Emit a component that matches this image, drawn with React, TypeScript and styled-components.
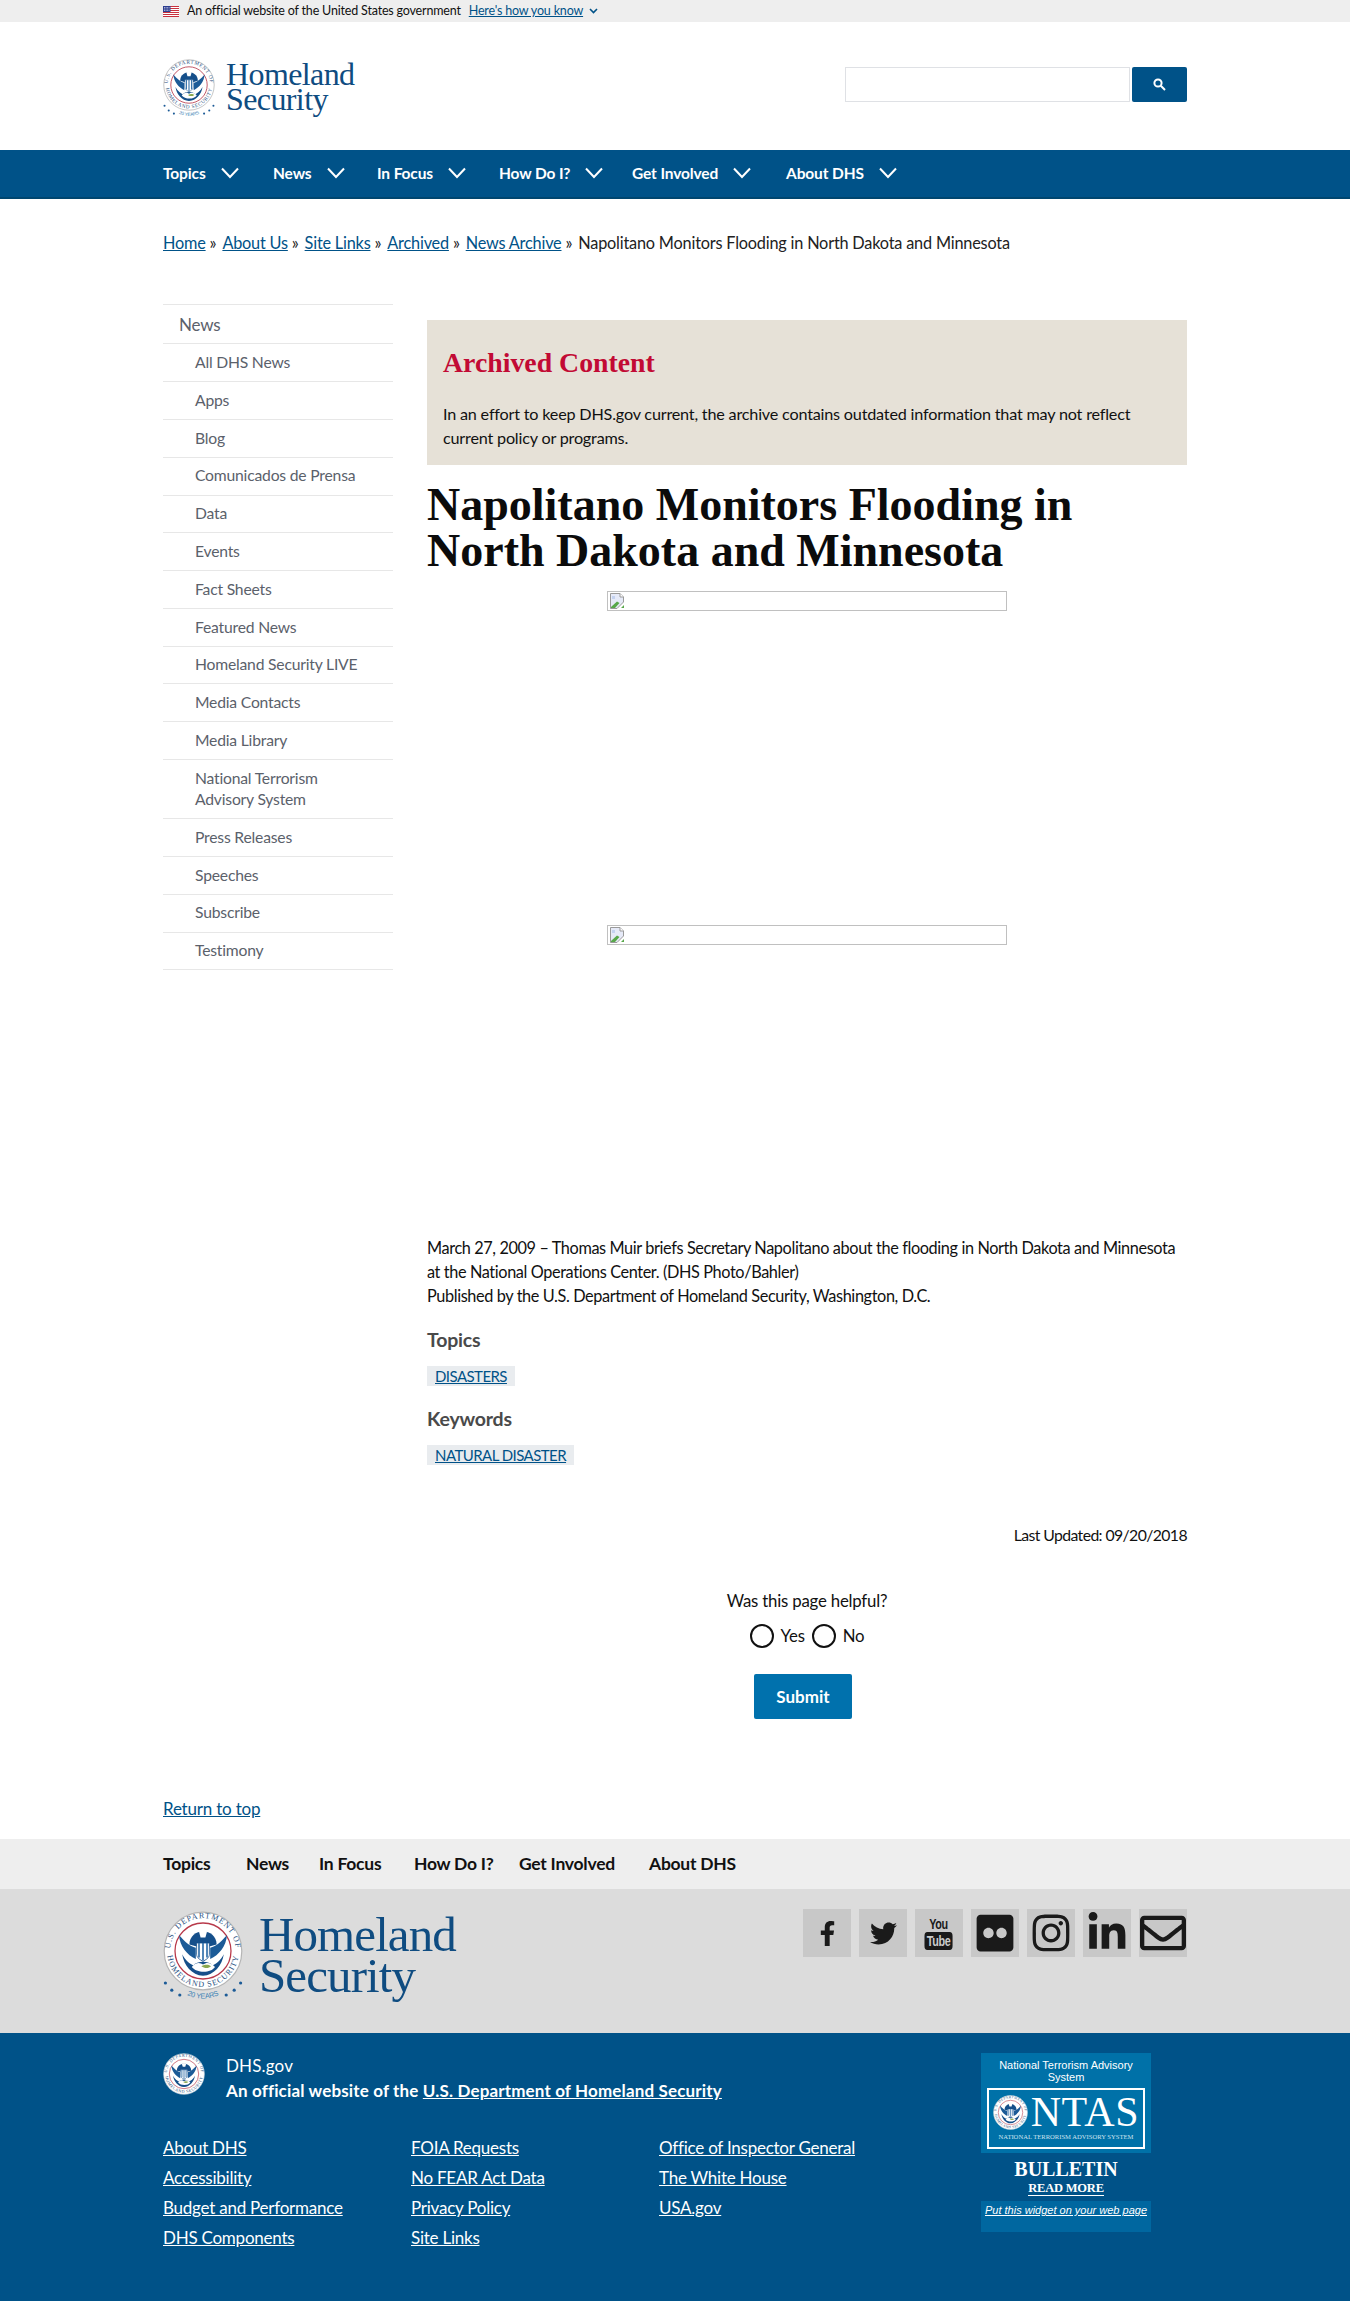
import React from "react";
import styled, { createGlobalStyle } from "styled-components";
import { FaFacebookF, FaTwitter, FaFlickr, FaInstagram, FaLinkedinIn, FaRegEnvelope } from "react-icons/fa";

const SANS = `"Lato", "Noto Sans", sans-serif`;
const SERIF = `"Liberation Serif", "Times New Roman", serif`;
const BLUE = "#005288";

const Global = createGlobalStyle`
  html, body { margin: 0; padding: 0; background: #fff; }
  body { font-family: ${SANS}; font-size: 16px; line-height: 24px; color: #111; letter-spacing: -0.2px; }
  a { color: ${BLUE}; }
  * { box-sizing: border-box; }
`;

const Wrap = styled.div`
  width: 1024px;
  margin: 0 auto;
`;
const Banner = styled.div`
  height: 22px;
  background: #eeeeee;
`;
const BannerRow = styled(Wrap)`
  display: flex;
  align-items: center;
  height: 22px;
  font-size: 12.5px;
  line-height: 22px;
  letter-spacing: -0.18px;
`;
const FlagBox = styled.svg`
  width: 16px;
  height: 11px;
  margin-right: 8px;
`;
const BannerLink = styled.a`
  margin-left: 8px;
  text-decoration: underline;
`;
const TinyChevron = styled.svg`
  width: 9px;
  height: 6px;
  margin-left: 6px;
`;
const Header = styled(Wrap)`
  height: 128px;
  display: flex;
  align-items: flex-start;
  justify-content: space-between;
`;
const Brand = styled.div<{ $big?: boolean }>`
  display: flex;
  align-items: flex-start;
  gap: ${(p) => (p.$big ? "16px" : "11px")};
  padding-top: ${(p) => (p.$big ? "22px" : "37px")};
`;
const BrandText = styled.div<{ $big?: boolean }>`
  font-family: ${SERIF};
  color: #0f4c81;
  font-size: ${(p) => (p.$big ? "49px" : "32px")};
  line-height: ${(p) => (p.$big ? "41px" : "25px")};
  letter-spacing: ${(p) => (p.$big ? "-0.9px" : "-0.6px")};
  padding-top: 3px;
`;
const SearchBox = styled.div`
  display: flex;
  gap: 2px;
  margin-top: 45px;
`;
const SearchInput = styled.div`
  width: 285px;
  height: 35px;
  border: 1px solid #dfe1e5;
  background: #fff;
`;
const SearchButton = styled.div`
  width: 55px;
  height: 35px;
  background: ${BLUE};
  border-radius: 2px;
  display: flex;
  align-items: center;
  justify-content: center;
  color: #fff;
`;
const NavBar = styled.nav`
  height: 49px;
  background: ${BLUE};
  border-bottom: 2px solid #00466f;
`;
const NavRow = styled(Wrap)`
  display: flex;
  align-items: center;
  height: 47px;
  padding-bottom: 1px;
`;
const NavItem = styled.div<{ $w: number }>`
  width: ${(p) => p.$w}px;
  flex: none;
  display: flex;
  align-items: center;
  gap: 15px;
  color: #fff;
  font-weight: 700;
  font-size: 15.5px;
  letter-spacing: -0.12px;
`;
const Breadcrumb = styled(Wrap)`
  padding-top: 32px;
  height: 105px;
  font-size: 16.3px;
  display: flex;
  gap: 6px;
  white-space: nowrap;
`;
const Crumb = styled.span`
  color: #222;
`;
const Columns = styled(Wrap)`
  display: flex;
  align-items: flex-start;
  gap: 34px;
`;
const Side = styled.ul`
  list-style: none;
  width: 230px;
  flex: none;
  margin: 0;
  padding: 0;
  border-top: 1px solid #e7e7e7;
`;
const SideItem = styled.li<{ $top?: boolean }>`
  color: #5b616b;
  border-bottom: 1px solid #e7e7e7;
  padding: 7.7px 20px 7.7px ${(p) => (p.$top ? "16px" : "32px")};
  font-size: ${(p) => (p.$top ? "17px" : "15.7px")};
  line-height: ${(p) => (p.$top ? "23px" : "21.4px")};
`;
const Main = styled.main`
  width: 760px;
  flex: none;
  padding-top: 16px;
`;
const Archive = styled.section`
  background: #e6e1d7;
  height: 145px;
  padding: 24px 16px 0;
`;
const ArchiveTitle = styled.h2`
  margin: 0 0 20px;
  font-family: ${SERIF};
  font-weight: 700;
  font-size: 27.8px;
  line-height: 38px;
  letter-spacing: 0;
  color: #c20a34;
`;
const ArchiveText = styled.p`
  margin: 0;
  font-size: 16.2px;
`;
const Title = styled.h1`
  margin: 17px 0 17px;
  font-family: ${SERIF};
  font-weight: 700;
  font-size: 46px;
  line-height: 46px;
  letter-spacing: 0;
  color: #0b0b0b;
`;
const Figure = styled.div<{ $after: number }>`
  width: 400px;
  height: 20px;
  margin: 0 auto ${(p) => p.$after}px;
  border: 1px solid #c0c0c0;
  padding: 1px;
  line-height: 0;
`;
const Caption = styled.p`
  margin: 0;
  font-size: 16.3px;
  letter-spacing: -0.39px;
`;
const Label = styled.h3<{ $top: number }>`
  margin: ${(p) => p.$top}px 0 12px;
  font-size: 19.5px;
  font-weight: 700;
  line-height: 24px;
  color: #4a4a4a;
`;
const Tag = styled.a`
  display: inline-block;
  height: 20px;
  line-height: 20px;
  padding: 0 8px;
  background: #e9ecef;
  font-size: 15px;
  letter-spacing: -0.55px;
  text-transform: uppercase;
  text-decoration: underline;
`;
const Updated = styled.div`
  margin-top: 56px;
  text-align: right;
  font-size: 15.8px;
  letter-spacing: -0.6px;
`;
const Helpful = styled.form`
  margin-top: 41px;
  display: flex;
  flex-direction: column;
  align-items: center;
`;
const Question = styled.div`
  font-size: 16.8px;
  line-height: 25px;
`;
const RadioRow = styled.div`
  display: flex;
  align-items: center;
  gap: 7px;
  margin-top: 10px;
  height: 26px;
  font-size: 16.8px;
`;
const Radio = styled.span`
  width: 24px;
  height: 24px;
  border: 2px solid #111;
  border-radius: 50%;
  background: #fff;
`;
const Submit = styled.button`
  margin: 25px 8px 0 0;
  width: 98px;
  height: 45px;
  border: 0;
  border-radius: 2px;
  background: #0071ad;
  color: #fff;
  font-family: ${SANS};
  font-weight: 700;
  font-size: 17px;
`;
const TopLink = styled(Wrap)`
  margin-top: 78px;
  height: 42px;
  font-size: 17px;
`;
const FootNav = styled.div`
  height: 50px;
  background: #eeeeee;
`;
const FootNavRow = styled(Wrap)`
  display: flex;
  align-items: center;
  height: 50px;
  gap: 32px;
`;
const FootNavItem = styled.span<{ $w: number }>`
  width: ${(p) => p.$w}px;
  white-space: nowrap;
  font-weight: 700;
  font-size: 17.5px;
  letter-spacing: -0.25px;
  color: #111;
`;
const LogoBand = styled.div`
  height: 144px;
  background: #dcdcdc;
`;
const LogoRow = styled(Wrap)`
  display: flex;
  justify-content: space-between;
  align-items: flex-start;
`;
const Socials = styled.div`
  display: flex;
  gap: 8px;
  margin-top: 20px;
`;
const Social = styled.div`
  width: 48px;
  height: 48px;
  background: #c8c8c8;
  color: #1a1a1a;
  display: flex;
  align-items: center;
  justify-content: center;
`;
const YouTube = styled.div`
  display: flex;
  flex-direction: column;
  align-items: center;
  font-family: "Liberation Sans", sans-serif;
  font-weight: 700;
  font-size: 15px;
  line-height: 14px;
  letter-spacing: -0.4px;
  transform: scaleX(0.72);
`;
const Tube = styled.span`
  background: #1a1a1a;
  color: #ccc;
  border-radius: 4px;
  padding: 2px 3px;
  margin-top: 1px;
`;
const Dark = styled.footer`
  height: 269px;
  background: ${BLUE};
  color: #fff;
  a { color: #fff; }
`;
const DarkRow = styled(Wrap)`
  display: flex;
  justify-content: space-between;
  align-items: flex-start;
`;
const DarkLeft = styled.div`
  width: 760px;
  padding-top: 20px;
`;
const Identity = styled.div`
  display: flex;
  gap: 21px;
  align-items: flex-start;
`;
const IdentityText = styled.div`
  font-size: 17px;
  line-height: 25px;
  letter-spacing: 0.15px;
`;
const Bold = styled.strong`
  font-weight: 700;
`;
const LinkGrid = styled.div`
  display: grid;
  grid-template-columns: 248px 248px 1fr;
  margin-top: 30px;
`;
const LinkCol = styled.div`
  display: flex;
  flex-direction: column;
  align-items: flex-start;
`;
const FootLink = styled.a`
  font-size: 17px;
  line-height: 30px;
  letter-spacing: -0.24px;
  text-decoration: underline;
`;
const Widget = styled.div`
  width: 170px;
  margin: 20px 36px 0 0;
  text-align: center;
`;
const WidgetTop = styled.div`
  background: #0071a8;
  height: 100px;
  padding: 6px 6px 0;
  font-family: "Liberation Sans", Arial, sans-serif;
  font-size: 11px;
  line-height: 12px;
  letter-spacing: 0;
`;
const NtasBox = styled.div`
  margin-top: 5px;
  height: 61px;
  border: 2px solid #fff;
  padding: 3px 4px 0;
  display: flex;
  flex-direction: column;
`;
const NtasRow = styled.div`
  display: flex;
  align-items: center;
  justify-content: space-between;
`;
const NtasWord = styled.span`
  font-family: ${SERIF};
  font-size: 42px;
  line-height: 38px;
  letter-spacing: 0.5px;
`;
const NtasSub = styled.div`
  font-family: ${SERIF};
  font-size: 6.6px;
  line-height: 12px;
  white-space: nowrap;
  color: #cfe3ef;
`;
const Bulletin = styled.div`
  font-family: ${SERIF};
  font-weight: 700;
  font-size: 20px;
  line-height: 18px;
  margin-top: 7px;
  letter-spacing: 0;
`;
const ReadMore = styled.div`
  font-family: ${SERIF};
  font-weight: 700;
  font-size: 12.5px;
  line-height: 14px;
  width: fit-content;
  margin: 3px auto 0;
  border-bottom: 1px solid #fff;
`;
const WidgetBottom = styled.div`
  margin-top: 5px;
  height: 31px;
  background: #0067a0;
  font-family: "Liberation Sans", Arial, sans-serif;
  font-size: 11px;
  font-style: italic;
  line-height: 18px;
  letter-spacing: 0;
  text-decoration: underline;
`;

const Seal = ({ w, years, dark }: { w: number; years?: boolean; dark?: boolean }) => {
  const id = `arc${w}`;
  return (
    <svg width={w} height={years ? w * 1.15 : w} viewBox={years ? "0 0 100 115" : "0 0 100 100"} aria-hidden="true" style={{ flex: "none" }}>
      <defs>
        <path id={`${id}t`} d="M 9 50 A 41 41 0 0 1 91 50" />
        <path id={`${id}b`} d="M 5 50 A 45 45 0 0 0 95 50" />
        <path id={`${id}y`} d="M 26 103 Q 50 116 74 103" />
      </defs>
      <circle cx="50" cy="50" r="48.5" fill="#fff" stroke={dark ? "#c9d4dd" : "#b5b5b5"} strokeWidth="1.5" />
      <text fontFamily="Liberation Serif, serif" fontSize="10" fill="#1f4f80" letterSpacing="1.2">
        <textPath href={`#${id}t`} startOffset="50%" textAnchor="middle">U.S. DEPARTMENT OF</textPath>
      </text>
      <text fontFamily="Liberation Serif, serif" fontSize="10" fill="#1f4f80" letterSpacing="1.2">
        <textPath href={`#${id}b`} startOffset="50%" textAnchor="middle">HOMELAND SECURITY</textPath>
      </text>
      <circle cx="50" cy="50" r="35" fill="#fff" stroke="#b8394a" strokeWidth="1.6" />
      <path d="M33 42 C33 20 67 20 67 42 L59 44 H41 Z" fill="#154f8a" />
      <path d="M45 26 C47 24 53 24 55 26 L53 33 H47 Z" fill="#fff" />
      <path d="M20 30 C21 44 30 55 41 60 L41 46 C33 44 27 38 20 30 Z" fill="#1c5b97" />
      <path d="M80 30 C79 44 70 55 59 60 L59 46 C67 44 73 38 80 30 Z" fill="#1c5b97" />
      <path d="M42 40 H58 V54 C58 59 53 61 50 63 C47 61 42 59 42 54 Z" fill="#fff" stroke="#154f8a" strokeWidth="1" />
      <path d="M45 40 V58 M50 40 V62 M55 40 V58" stroke="#2a6aa6" strokeWidth="2" />
      <path d="M24 54 C26 68 36 80 50 81 C64 80 74 68 76 54 C72 62 66 66 62 68 C58 62 42 62 38 68 C34 66 28 62 24 54 Z" fill="#154f8a" />
      <path d="M36 70 C42 63 47 65 50 67 C54 64 60 64 65 70 C60 78 42 78 36 70 Z" fill="#fff" />
      <path d="M48 69 C53 66 58 67 60 69 C57 72 52 72 48 69 Z" fill="#8aa84f" />
      {years && (
        <>
          {[[3, 90], [11, 99], [21, 105], [79, 105], [89, 99], [97, 90]].map(([x, y]) => (
            <circle key={x} cx={x} cy={y} r="2" fill="#1c5b97" />
          ))}
          <text fontFamily="Liberation Sans, sans-serif" fontSize="9" fill="#3b82b5">
            <textPath href={`#${id}y`} startOffset="50%" textAnchor="middle">20 YEARS</textPath>
          </text>
        </>
      )}
    </svg>
  );
};

const Flag = () => (
  <FlagBox viewBox="0 0 16 11" aria-hidden="true">
    <rect width="16" height="11" fill="#fff" />
    {[0, 2, 4, 6, 8, 10].map((y) => (
      <rect key={y} y={y} width="16" height="1" fill="#c8313e" />
    ))}
    <rect width="7.5" height="6" fill="#2d3e8f" />
    <path d="M1 1.5h5.5M1 3h5.5M1 4.5h5.5" stroke="#dfe3f5" strokeWidth=".7" strokeDasharray="1 .6" />
  </FlagBox>
);

const NavChevron = () => (
  <svg width="18" height="12" viewBox="0 0 18 12" aria-hidden="true" fill="none" stroke="#fff" strokeWidth="2">
    <path d="M1 1.5 L9 10 L17 1.5" />
  </svg>
);

const BrokenImage = () => (
  <svg width="16" height="16" viewBox="0 0 16 16" aria-hidden="true">
    <path d="M1.5 .5 H11 L14.5 4 V9 L8 15.5 H1.5 Z" fill="#e6eaf8" stroke="#9a9a9a" />
    <path d="M11 .5 V4 H14.5" fill="#fff" stroke="#9a9a9a" />
    <path d="M2 14 L8 8.5 L10.5 10 L6 15 H2 Z" fill="#58a84a" />
    <path d="M12 15 L15 12 V15 Z" fill="#58a84a" />
    <rect x="3" y="3" width="3" height="3" fill="#c4d2f0" />
  </svg>
);

const SearchGlyph = () => (
  <svg width="13" height="13" viewBox="0 0 13 13" aria-hidden="true" fill="none" stroke="#fff" strokeWidth="2">
    <circle cx="5" cy="5" r="3.6" />
    <path d="M7.8 7.8 L12 12" />
  </svg>
);

const nav: [string, number][] = [
  ["Topics", 110],
  ["News", 104],
  ["In Focus", 122],
  ["How Do I?", 133],
  ["Get Involved", 154],
  ["About DHS", 130],
];
const footNav: [string, number][] = [
  ["Topics", 51],
  ["News", 41],
  ["In Focus", 63],
  ["How Do I?", 73],
  ["Get Involved", 98],
  ["About DHS", 83],
];
const crumbs = ["Home", "About Us", "Site Links", "Archived", "News Archive"];
const side = [
  "All DHS News", "Apps", "Blog", "Comunicados de Prensa", "Data", "Events", "Fact Sheets", "Featured News",
  "Homeland Security LIVE", "Media Contacts", "Media Library", "National Terrorism Advisory System",
  "Press Releases", "Speeches", "Subscribe", "Testimony",
];
const links = [
  ["About DHS", "Accessibility", "Budget and Performance", "DHS Components"],
  ["FOIA Requests", "No FEAR Act Data", "Privacy Policy", "Site Links"],
  ["Office of Inspector General", "The White House", "USA.gov"],
];

export default function App() {
  return (
    <>
      <Global />
      <Banner>
        <BannerRow>
          <Flag />
          <span>An official website of the United States government</span>
          <BannerLink href="#">Here's how you know</BannerLink>
          <TinyChevron viewBox="0 0 9 6" fill="none" stroke={BLUE} strokeWidth="1.6" aria-hidden="true">
            <path d="M1 1 L4.5 4.5 L8 1" />
          </TinyChevron>
        </BannerRow>
      </Banner>
      <Header>
        <Brand>
          <Seal w={52} years />
          <BrandText>Homeland<br />Security</BrandText>
        </Brand>
        <SearchBox>
          <SearchInput />
          <SearchButton><SearchGlyph /></SearchButton>
        </SearchBox>
      </Header>
      <NavBar>
        <NavRow>
          {nav.map(([label, w]) => (
            <NavItem key={label} $w={w}>{label}<NavChevron /></NavItem>
          ))}
        </NavRow>
      </NavBar>
      <Breadcrumb>
        {crumbs.map((c) => (
          <Crumb key={c}><a href="#">{c}</a> »</Crumb>
        ))}
        <Crumb>Napolitano Monitors Flooding in North Dakota and Minnesota</Crumb>
      </Breadcrumb>
      <Columns>
        <Side>
          <SideItem $top>News</SideItem>
          {side.map((s) => <SideItem key={s}>{s}</SideItem>)}
        </Side>
        <Main>
          <Archive>
            <ArchiveTitle>Archived Content</ArchiveTitle>
            <ArchiveText>In an effort to keep DHS.gov current, the archive contains outdated information that may not reflect current policy or programs.</ArchiveText>
          </Archive>
          <Title>Napolitano Monitors Flooding in North Dakota and Minnesota</Title>
          <Figure $after={314}><BrokenImage /></Figure>
          <Figure $after={291}><BrokenImage /></Figure>
          <Caption>
            March 27, 2009 – Thomas Muir briefs Secretary Napolitano about the flooding in North Dakota and Minnesota at the National Operations Center. (DHS Photo/Bahler)
            <br />
            Published by the U.S. Department of Homeland Security, Washington, D.C.
          </Caption>
          <Label $top={20}>Topics</Label>
          <Tag href="#">Disasters</Tag>
          <Label $top={19}>Keywords</Label>
          <Tag href="#">Natural Disaster</Tag>
          <Updated>Last Updated: 09/20/2018</Updated>
          <Helpful>
            <Question>Was this page helpful?</Question>
            <RadioRow>
              <Radio /><span>Yes</span><Radio /><span>No</span>
            </RadioRow>
            <Submit type="button">Submit</Submit>
          </Helpful>
        </Main>
      </Columns>
      <TopLink><a href="#">Return to top</a></TopLink>
      <FootNav>
        <FootNavRow>
          {footNav.map(([label, w]) => <FootNavItem key={label} $w={w}>{label}</FootNavItem>)}
        </FootNavRow>
      </FootNav>
      <LogoBand>
        <LogoRow>
          <Brand $big>
            <Seal w={80} years />
            <BrandText $big>Homeland<br />Security</BrandText>
          </Brand>
          <Socials>
            <Social><FaFacebookF size={25} /></Social>
            <Social><FaTwitter size={27} /></Social>
            <Social><YouTube><span>You</span><Tube>Tube</Tube></YouTube></Social>
            <Social><FaFlickr size={42} /></Social>
            <Social><FaInstagram size={42} /></Social>
            <Social><FaLinkedinIn size={42} /></Social>
            <Social><FaRegEnvelope size={46} /></Social>
          </Socials>
        </LogoRow>
      </LogoBand>
      <Dark>
        <DarkRow>
          <DarkLeft>
            <Identity>
              <Seal w={42} dark />
              <IdentityText>
                DHS.gov<br />
                <Bold>An official website of the <a href="#">U.S. Department of Homeland Security</a></Bold>
              </IdentityText>
            </Identity>
            <LinkGrid>
              {links.map((col, i) => (
                <LinkCol key={i}>
                  {col.map((l) => <FootLink key={l} href="#">{l}</FootLink>)}
                </LinkCol>
              ))}
            </LinkGrid>
          </DarkLeft>
          <Widget>
            <WidgetTop>
              National Terrorism Advisory System
              <NtasBox>
                <NtasRow>
                  <Seal w={35} dark />
                  <NtasWord>NTAS</NtasWord>
                </NtasRow>
                <NtasSub>NATIONAL TERRORISM ADVISORY SYSTEM</NtasSub>
              </NtasBox>
            </WidgetTop>
            <Bulletin>BULLETIN</Bulletin>
            <ReadMore>READ MORE</ReadMore>
            <WidgetBottom>Put this widget on your web page</WidgetBottom>
          </Widget>
        </DarkRow>
      </Dark>
    </>
  );
}
